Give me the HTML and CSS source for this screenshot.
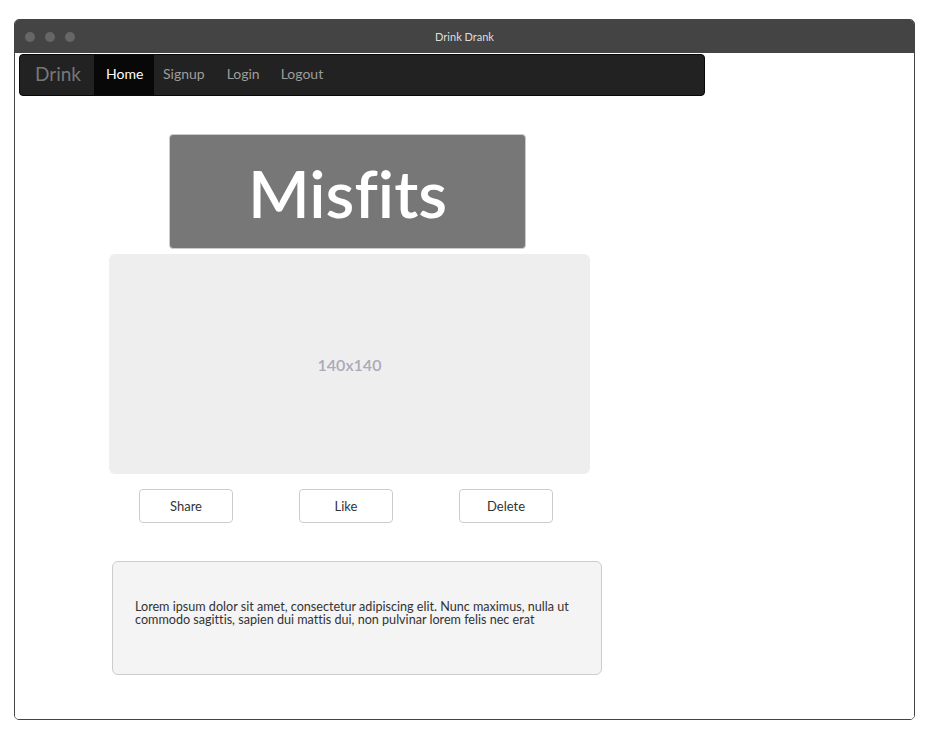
FILE: index.html
```html
<!DOCTYPE html>
<html>
<head>
<meta charset="utf-8">
<title>Drink Drank</title>
<link rel="stylesheet" href="styles.css">
</head>
<body>
<div class="window">
  <div class="titlebar">
    <div class="dots"><span class="dot"></span><span class="dot"></span><span class="dot"></span></div>
    <div class="title">Drink Drank</div>
  </div>
  <div class="content">
    <nav class="navbar">
      <span class="brand">Drink</span>
      <a class="nav-item active">Home</a>
      <a class="nav-item">Signup</a>
      <a class="nav-item">Login</a>
      <a class="nav-item">Logout</a>
    </nav>
    <main class="main">
      <div class="hero">Misfits</div>
      <div class="placeholder">140x140</div>
      <div class="actions">
        <button class="btn">Share</button>
        <button class="btn">Like</button>
        <button class="btn">Delete</button>
      </div>
      <div class="textbox">
        <p>Lorem ipsum dolor sit amet, consectetur adipiscing elit. Nunc maximus, nulla ut commodo sagittis, sapien dui mattis dui, non pulvinar lorem felis nec erat</p>
      </div>
    </main>
  </div>
</div>
</body>
</html>
```
FILE: styles.css
```css
* { box-sizing: border-box; }
html, body { margin: 0; padding: 0; background: #fff; }
body { font-family: "Source Sans Pro", "Lato", "Liberation Sans", sans-serif; color: #333; font-variant-ligatures: none; }

.window {
  margin: 19px 0 0 14px;
  width: 901px;
  height: 701px;
  border: 1px solid #444;
  border-radius: 5px;
  overflow: hidden;
  display: flex;
  flex-direction: column;
}
.titlebar {
  height: 33px;
  background: #444;
  display: flex;
  align-items: center;
  position: relative;
  flex: none;
}
.dots { display: flex; gap: 10px; padding-left: 10px; }
.dot { width: 10px; height: 10px; border-radius: 50%; background: #666; display: block; }
.title {
  position: absolute; left: 0; right: 0; top: 0; bottom: 0;
  display: flex; align-items: center; justify-content: center;
  color: #ddd; font-size: 11px;
}
.content { flex: 1; background: #fff; padding: 1px 0 0 4px; }

.navbar {
  width: 686px;
  height: 42px;
  background: #222;
  border: 1px solid #080808;
  border-radius: 4px;
  display: flex;
  align-items: stretch;
  overflow: hidden;
}
.brand {
  color: #777; font-size: 19px; display: flex; align-items: center;
  padding: 0 15px 3px; width: 74px;
}
.nav-item {
  color: #9d9d9d; font-size: 14px; display: flex; align-items: center;
  padding: 0 10px 3px 9px;
}
.nav-item.active { background: #080808; color: #fff; padding: 0 12px 3px; width: 60px; }
.nav-item:nth-child(4) { padding-left: 12px; padding-right: 12px; }

.main { width: 500px; margin: 38px 0 0 90px; }
.hero {
  margin-left: 60px;
  width: 357px; height: 115px;
  background: #777;
  border: 1px solid #ccc;
  border-radius: 4px;
  color: #fff;
  font-size: 66px;
  font-weight: 600;
  display: flex; align-items: center; justify-content: center;
  padding-top: 2px;
}
.placeholder {
  margin-top: 5px;
  width: 481px; height: 220px;
  background: #eee;
  border-radius: 6px;
  color: #aab;
  font-size: 16px; font-weight: 600;
  display: flex; align-items: center; justify-content: center;
}
.actions { display: flex; gap: 66px; margin: 15px 0 0 30px; }
.btn {
  width: 94px; height: 34px;
  background: #fff;
  border: 1px solid #ccc;
  border-radius: 4px;
  font-family: inherit; font-size: 13px; color: #333;
  padding: 0;
}
.textbox {
  margin: 38px 0 0 3px;
  width: 490px; height: 114px;
  background: #f4f4f4;
  border: 1px solid #ccc;
  border-radius: 6px;
  display: flex; align-items: center;
  padding: 0 22px 10px;
}
.textbox p { margin: 0; font-size: 12.6px; line-height: 13px; color: #333; }
```
